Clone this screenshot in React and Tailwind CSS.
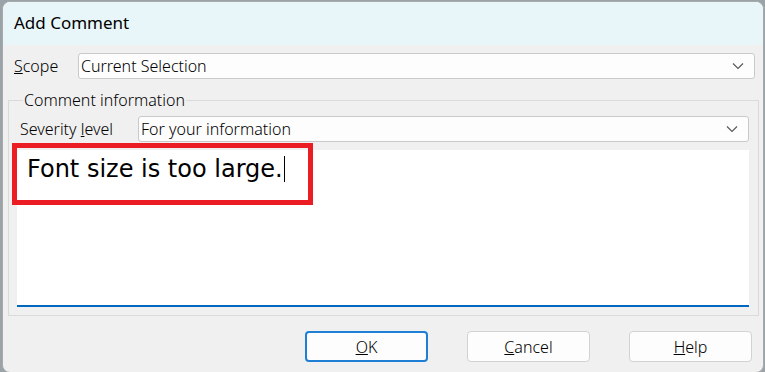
import React from 'react';

const ui = { fontFamily: '"Noto Sans", "Noto Sans CJK JP", sans-serif' };

function Chevron() {
    return (
        <svg width="12" height="8" viewBox="0 0 12 8" className="text-[#555]">
            <path d="M1 1.5 L6 6.5 L11 1.5" fill="none" stroke="currentColor" strokeWidth="1.1" />
        </svg>
    );
}

function Combo({ value, className }) {
    return (
        <div className={`flex items-center justify-between h-[26px] bg-[#fdfdfd] border border-[#c9c9c9] rounded-[3px] pl-[2px] pr-[10px] ${className}`}>
            <span className="text-[16px] leading-none text-black font-light">{value}</span>
            <Chevron />
        </div>
    );
}

function Button({ children, primary }) {
    return (
        <div
            className={`w-[123px] h-[31px] flex items-center justify-center rounded-[4px] bg-[#fdfdfd] text-[16px] font-light text-black ${
                primary ? 'border-2 border-[#1f7fd4]' : 'border border-[#d2d2d2]'
            }`}
        >
            {children}
        </div>
    );
}

export default function App() {
    return (
        <div className="w-[765px] h-[372px] bg-[#9aa3a8] overflow-hidden" style={ui}>
            <div className="ml-[2px] mt-[1px] w-[762px] h-[372px] flex flex-col bg-[#f0f0f0] border border-[#a9a9a9] rounded-[8px] overflow-hidden">
                {/* Title bar */}
                <div className="h-[43px] shrink-0 bg-[#e9f6f9] flex items-center pl-[11px] pb-[1px] text-[17px] text-black">
                    Add Comment
                </div>

                {/* Scope */}
                <div className="flex items-center mt-[8px] pl-[11px]">
                    <span className="w-[64px] text-[16px] font-light text-black">
                        <span className="underline">S</span>cope
                    </span>
                    <Combo value="Current Selection" className="w-[677px]" />
                </div>

                {/* Group box */}
                <fieldset className="mt-[12px] ml-[5px] w-[751px] h-[225px] border border-[#dadada] pl-[8px] pt-[7px]">
                    <legend className="ml-[6px] px-[1px] text-[16px] font-light leading-[18px] text-black">Comment information</legend>
                    <div className="flex items-center">
                        <span className="w-[121px] pl-[3px] text-[16px] font-light text-black">
                            Severity <span className="underline">l</span>evel
                        </span>
                        <Combo value="For your information" className="w-[611px]" />
                    </div>
                    <div className="relative mt-[8px] w-[732px] h-[157px] bg-white border-b-2 border-[#0067c0]">
                        <div
                            className="absolute left-[-5px] top-[-7px] w-[301px] h-[62px] border-[5px] border-[#ec1c24]"
                        />
                        <div
                            className="pt-[5px] pl-[10px] text-[24px] leading-[28px] text-black flex items-center"
                            style={{ fontFamily: '"DejaVu Sans", sans-serif' }}
                        >
                            Font size is too large.
                            <span className="inline-block w-[1px] h-[26px] bg-black ml-[1px]" />
                        </div>
                    </div>
                </fieldset>

                {/* Buttons */}
                <div className="flex justify-end gap-[39px] mt-[15px] pr-[11px]">
                    <Button primary>
                        <span><span className="underline">O</span>K</span>
                    </Button>
                    <Button>
                        <span><span className="underline">C</span>ancel</span>
                    </Button>
                    <Button>
                        <span><span className="underline">H</span>elp</span>
                    </Button>
                </div>
            </div>
        </div>
    );
}
